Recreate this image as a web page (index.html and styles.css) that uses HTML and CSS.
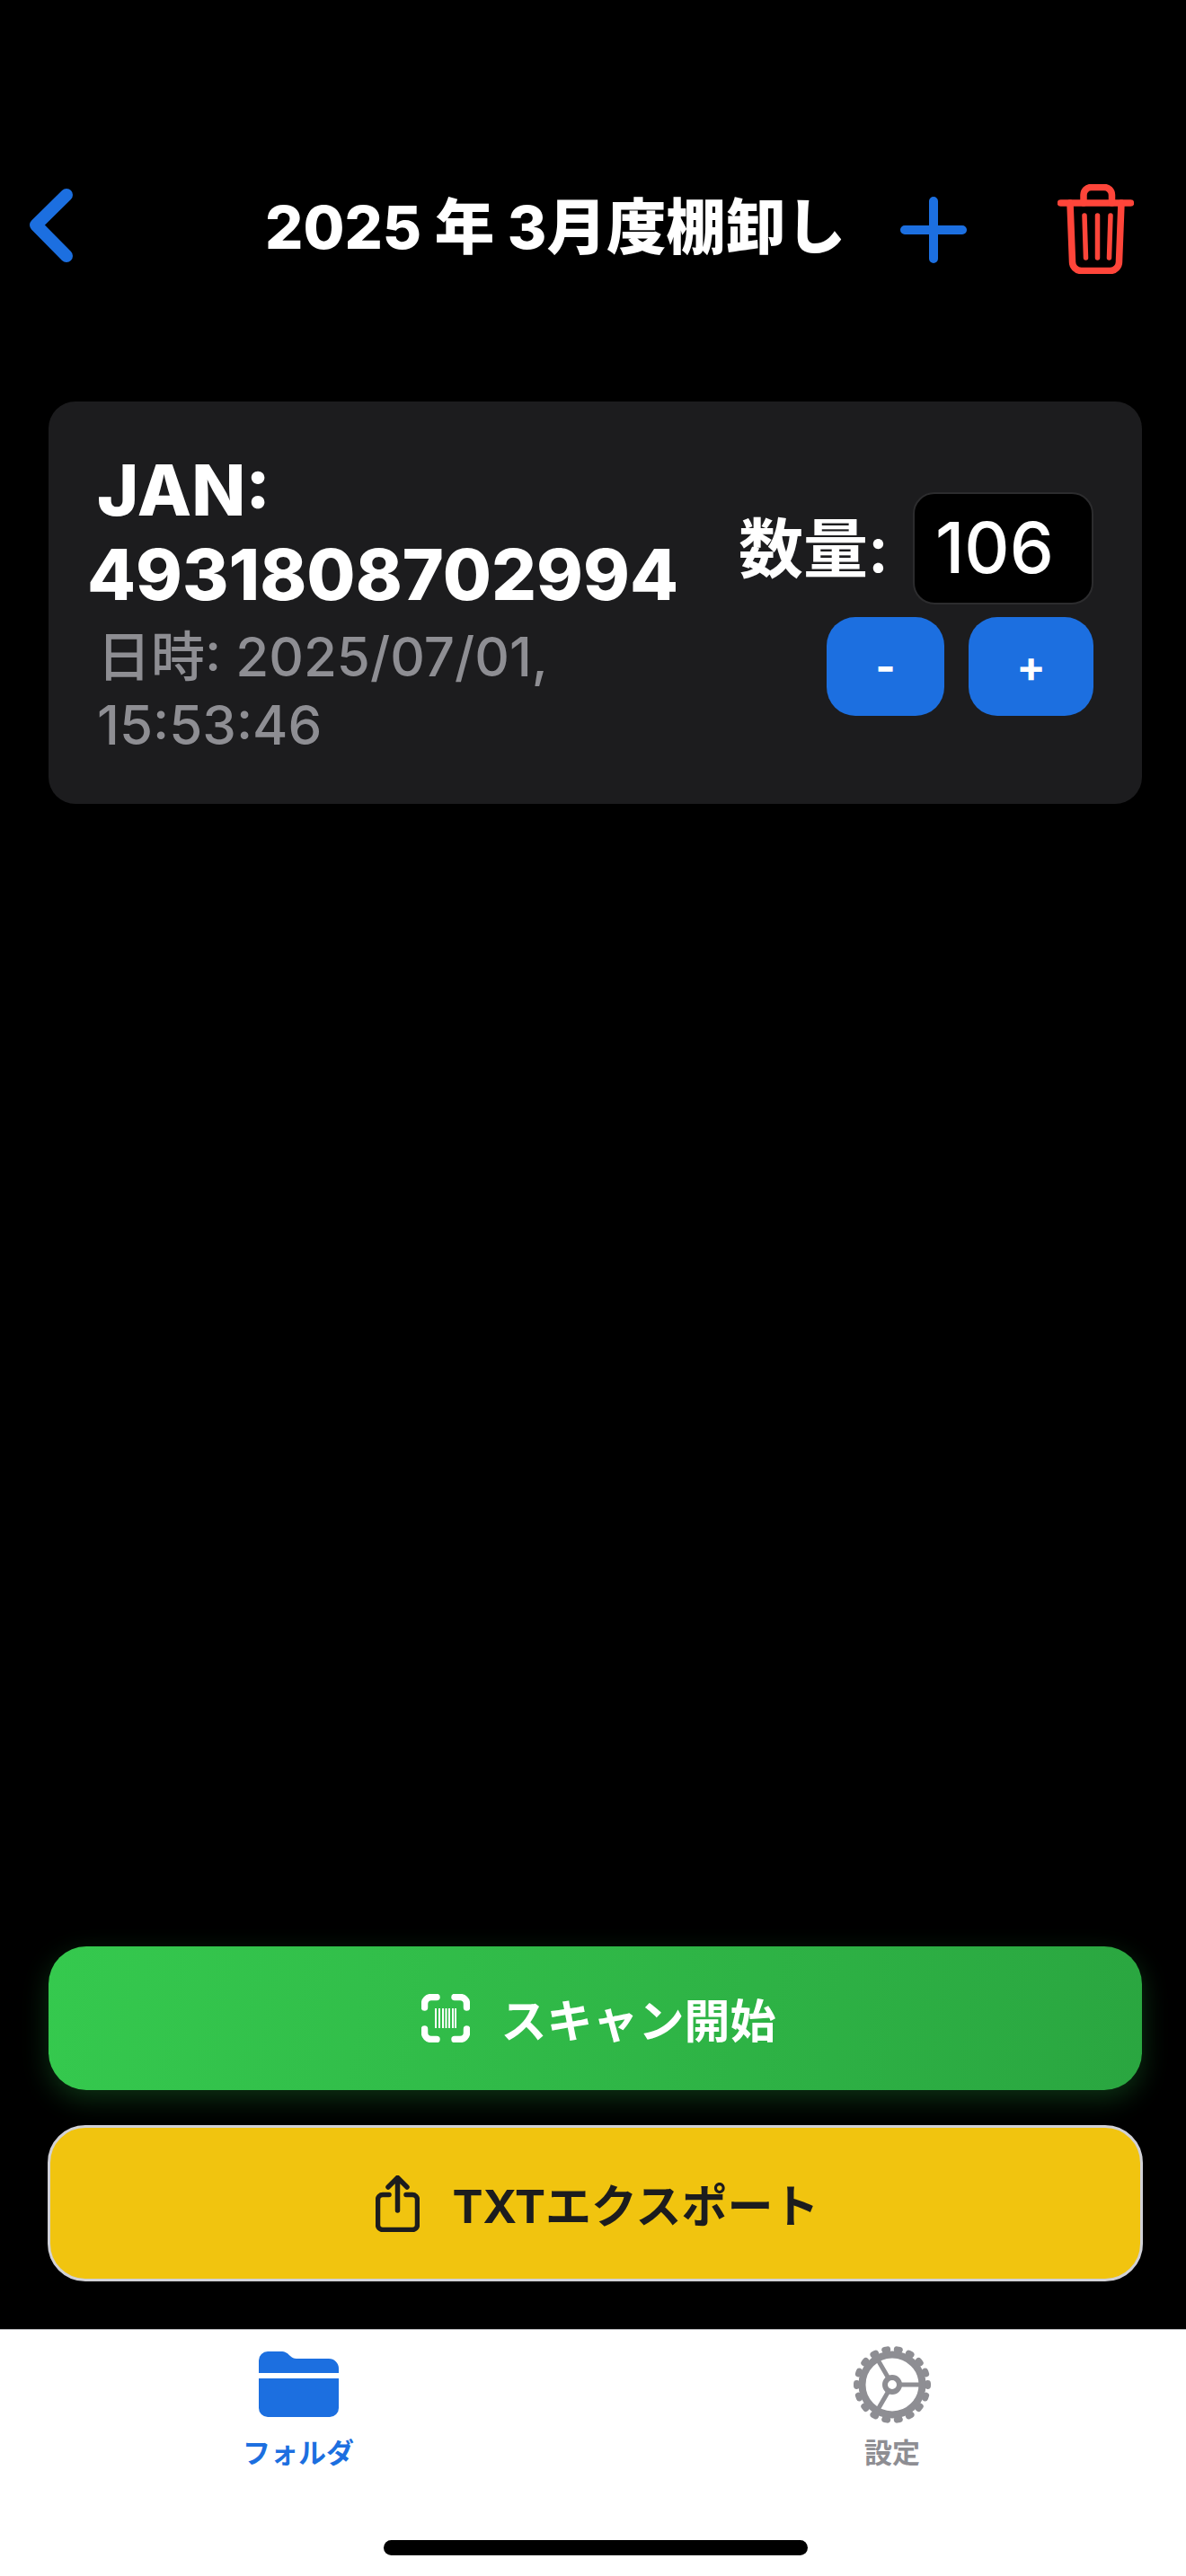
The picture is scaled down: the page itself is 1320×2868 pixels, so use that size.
FILE: index.html
```html
<!DOCTYPE html>
<html lang="ja">

<head>
    <meta charset="UTF-8">
    <meta name="viewport" content="width=device-width, initial-scale=1.0">
    <title>棚卸し</title>
    <link rel="stylesheet" href="styles.css">
</head>

<body>
    <div class="screen">
        <header class="header">
            <svg class="icon-back" width="50" height="84" viewBox="0 0 50 84">
                <path d="M42 8 L8 41.5 L42 76" />
            </svg>
            <h1 class="title">2025 年 3月度棚卸し</h1>
            <svg class="icon-plus" width="74" height="74" viewBox="0 0 74 74">
                <path d="M37 5 V69 M5 37 H69" />
            </svg>
            <svg class="icon-trash" width="85" height="100" viewBox="0 0 85 100">
                <path d="M3.5 21 H81.5" />
                <path d="M29 21 V12 A8.5 8.5 0 0 1 37.5 3.5 H52 A8.5 8.5 0 0 1 60.5 12 V21" />
                <path d="M14 21 L16.5 86 A10 10 0 0 0 26.5 96.5 H58.5 A10 10 0 0 0 68.5 86 L71 21" />
                <path class="trash-bar" d="M30 35 L31.5 82 M44.5 35 V82 M59 35 L57.5 82" />
            </svg>
        </header>

        <main class="list">
            <div class="card">
                <div class="card-info">
                    <div class="card-jan">JAN: 4931808702994</div>
                    <div class="card-date">日時: 2025/07/01, 15:53:46</div>
                </div>
                <div class="card-controls">
                    <div class="qty-row">
                        <span class="qty-label">数量:</span>
                        <div class="qty-input">106</div>
                    </div>
                    <div class="qty-buttons">
                        <button class="qty-btn qty-minus">-</button>
                        <button class="qty-btn qty-plus">+</button>
                    </div>
                </div>
            </div>
        </main>

        <div class="actions">
            <button class="action action-scan">
                <svg class="icon-scan" width="54" height="54" viewBox="0 0 54 54">
                    <path d="M17 3.5 H11 A7.5 7.5 0 0 0 3.5 11 V15" />
                    <path d="M37 3.5 H43 A7.5 7.5 0 0 1 50.5 11 V15" />
                    <path d="M17 50.5 H11 A7.5 7.5 0 0 1 3.5 43 V39" />
                    <path d="M37 50.5 H43 A7.5 7.5 0 0 0 50.5 43 V39" />
                    <path class="scan-code" d="M16 16 V38 M20 16 V38 M24 16 V38 M27.5 16 V38 M31 16 V38 M35 16 V38 M38 16 V38" />
                </svg>
                スキャン開始
            </button>
            <button class="action action-export">
                <svg class="icon-export" width="49" height="63" viewBox="0 0 49 63">
                    <path d="M24.5 39 V3 M14 13 L24.5 2.5 L35 13" />
                    <path d="M15 21.5 H8 A5.5 5.5 0 0 0 2.5 27 V55 A5.5 5.5 0 0 0 8 60.5 H41 A5.5 5.5 0 0 0 46.5 55 V27 A5.5 5.5 0 0 0 41 21.5 H34" />
                </svg>
                TXTエクスポート
            </button>
        </div>

        <nav class="tabbar">
            <div class="tabs">
                <div class="tab tab-active">
                    <div class="tab-icon">
                        <svg width="89" height="74" viewBox="0 0 89 74">
                            <path d="M0 24 V10 A10 10 0 0 1 10 0 H24 C30 0 32 2 35 5 C37 7 39 8 42 8 H78 A11 11 0 0 1 89 19 V24 Z" />
                            <path d="M0 30 H89 V63 A10 10 0 0 1 79 73 H10 A10 10 0 0 1 0 63 Z" />
                        </svg>
                    </div>
                    <span class="tab-label">フォルダ</span>
                </div>
                <div class="tab tab-settings">
                    <div class="tab-icon">
                        <svg class="icon-gear" width="90" height="90" viewBox="-45 -45 90 90">
                            <circle class="gear-teeth" r="39.5" pathLength="18" stroke-dasharray="0.22 0.78" stroke-dashoffset="0.11" />
                            <circle class="gear-ring" r="33.5" />
                            <path class="gear-spoke" d="M8 0 H31 M-4 -7 L-16.5 -28.5 M-4 7 L-16.5 28.5" />
                            <circle class="gear-hub" r="8" />
                        </svg>
                    </div>
                    <span class="tab-label">設定</span>
                </div>
            </div>
            <div class="home-indicator"></div>
        </nav>
    </div>
</body>

</html>
```

FILE: styles.css
```css
* {
    box-sizing: border-box;
}

body {
    margin: 0;
    background-color: #000;
    font-family: Inter, "Noto Sans CJK JP", sans-serif;
}

svg {
    display: block;
    flex: none;
    fill: none;
}

button {
    border: 0;
    font-family: inherit;
}

.screen {
    display: flex;
    flex-direction: column;
    height: 2868px;
    overflow: hidden;
}

/* header */
.header {
    display: flex;
    align-items: flex-start;
    padding: 205px 0 0 32px;
}

.icon-back {
    margin-top: 4px;
    stroke: #1c6fe0;
    stroke-width: 14;
    stroke-linecap: round;
    stroke-linejoin: round;
}

.title {
    width: 638px;
    margin: 8px 0 0 213px;
    color: #fff;
    font-size: 66.5px;
    font-weight: 800;
    line-height: 80px;
    white-space: nowrap;
}

.icon-plus {
    margin: 14px 0 0 69px;
    stroke: #1c6fe0;
    stroke-width: 10;
    stroke-linecap: round;
}

.icon-trash {
    margin-left: 101px;
    stroke: #ff453a;
    stroke-width: 7.5;
    stroke-linecap: round;
    stroke-linejoin: round;
}

.trash-bar {
    stroke-width: 5.5;
}

/* list */
.list {
    flex: 1;
    padding: 142px 49px 0 54px;
}

.card {
    display: flex;
    align-items: center;
    justify-content: space-between;
    height: 448px;
    padding: 2px 54px 0 43px;
    background-color: #1c1c1e;
    border-radius: 30px;
}

.card-info {
    width: 680px;
}

.card-jan {
    color: #fff;
    font-size: 78.5px;
    font-weight: 800;
    line-height: 94px;
    text-indent: 11px;
}

.card-date {
    margin: 6px 0 0 11px;
    color: #8e8e93;
    font-size: 60px;
    font-weight: 500;
    line-height: 76px;
}

.card-controls {
    display: flex;
    flex-direction: column;
    align-items: flex-end;
    gap: 14px;
}

.qty-row {
    display: flex;
    align-items: center;
    gap: 27px;
}

.qty-label {
    margin-top: -10px;
    color: #fff;
    font-size: 72px;
    font-weight: 600;
}

.qty-input {
    width: 201px;
    height: 125px;
    padding-left: 23px;
    background-color: #000;
    border: 2px solid #2c2c2e;
    border-radius: 24px;
    color: #fff;
    font-size: 78px;
    font-weight: 500;
    line-height: 119px;
}

.qty-buttons {
    display: flex;
    gap: 27px;
}

.qty-btn {
    height: 110px;
    background-color: #1c6fe0;
    border-radius: 32px;
    color: #fff;
    font-size: 48px;
    font-weight: 700;
}

.qty-minus {
    width: 131px;
}

.qty-plus {
    width: 139px;
}

/* bottom buttons */
.actions {
    display: flex;
    flex-direction: column;
    gap: 39px;
    padding: 0 49px 53px 54px;
}

.action {
    display: flex;
    align-items: center;
    justify-content: center;
    border-radius: 42px;
    font-size: 51px;
    font-weight: 700;
}

.action-scan {
    gap: 34px;
    height: 160px;
    padding-left: 14px;
    background: linear-gradient(100deg, #35c94e, #2aa640);
    box-shadow: 0 10px 30px rgba(48, 200, 80, 0.25);
    color: #fff;
}

.action-export {
    gap: 36px;
    height: 174px;
    margin: 0 -1px;
    padding-left: 11px;
    background-color: #f1c40f;
    border: 3px solid #d1d1d6;
    color: #1c1c1e;
}

.icon-scan {
    stroke: #fff;
    stroke-width: 7.5;
    stroke-linecap: round;
}

.scan-code {
    stroke-width: 2;
    stroke-linecap: butt;
}

.icon-export {
    stroke: #1c1c1e;
    stroke-width: 5.5;
    stroke-linecap: round;
    stroke-linejoin: round;
}

/* tab bar */
.tabbar {
    display: flex;
    flex-direction: column;
    align-items: center;
    height: 275px;
    background-color: #fff;
    border-top: 1px solid #b5b5b8;
}

.tabs {
    display: flex;
    width: 100%;
    padding-left: 5px;
}

.tab {
    display: flex;
    flex: 1;
    flex-direction: column;
    align-items: center;
    padding-top: 16px;
}

.tab-settings {
    padding-left: 7px;
}

.tab-icon {
    display: flex;
    align-items: center;
    height: 90px;
}

.tab-icon svg {
    fill: #1c6fe0;
}

.tab-label {
    margin-top: 9px;
    color: #8e8e93;
    font-size: 31px;
    font-weight: 600;
    line-height: 44px;
}

.tab-active .tab-label {
    color: #1c6fe0;
}

.tab-icon .icon-gear {
    fill: none;
    stroke: #8e8e93;
}

.gear-teeth {
    stroke-width: 7;
    stroke-linecap: round;
}

.gear-ring {
    stroke-width: 8;
}

.gear-spoke {
    stroke-width: 5;
}

.gear-hub {
    fill: #fff;
    stroke-width: 6;
}

.home-indicator {
    width: 472px;
    height: 17px;
    margin: auto 0 23px 6px;
    background-color: #000;
    border-radius: 9px;
}
```
